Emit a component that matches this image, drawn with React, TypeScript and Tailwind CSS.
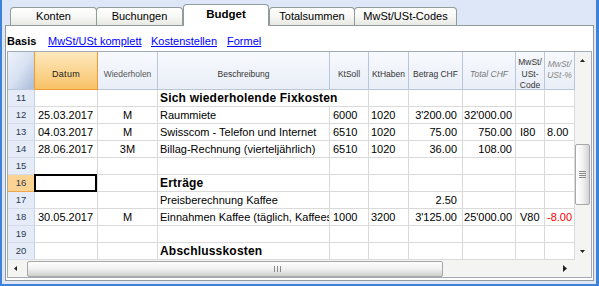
import React from 'react';

type Row = {
  n: number;
  date?: string;
  rep?: string;
  desc?: string;
  bold?: boolean;
  soll?: string;
  haben?: string;
  betrag?: string;
  total?: string;
  code?: string;
  pct?: string;
  red?: boolean;
  sel?: boolean;
  over?: boolean;
};

const rows: Row[] = [
  { n: 11, desc: 'Sich wiederholende Fixkosten', bold: true, over: true },
  { n: 12, date: '25.03.2017', rep: 'M', desc: 'Raummiete', soll: '6000', haben: '1020', betrag: "3'200.00", total: "32'000.00" },
  { n: 13, date: '04.03.2017', rep: 'M', desc: 'Swisscom - Telefon und Internet', soll: '6510', haben: '1020', betrag: '75.00', total: '750.00', code: 'I80', pct: '8.00' },
  { n: 14, date: '28.06.2017', rep: '3M', desc: 'Billag-Rechnung (vierteljährlich)', soll: '6510', haben: '1020', betrag: '36.00', total: '108.00' },
  { n: 15 },
  { n: 16, desc: 'Erträge', bold: true, sel: true },
  { n: 17, desc: 'Preisberechnung Kaffee', betrag: '2.50' },
  { n: 18, date: '30.05.2017', rep: 'M', desc: 'Einnahmen Kaffee (täglich, Kaffeestube)', soll: '1000', haben: '3200', betrag: "3'125.00", total: "25'000.00", code: 'V80', pct: '-8.00', red: true },
  { n: 19 },
  { n: 20, desc: 'Abschlusskosten', bold: true },
];

function Tab({ label, className, active }: { label: string; className: string; active?: boolean }) {
  if (active) {
    return (
      <div
        className={`h-[22px] mb-[-1px] border border-b-0 border-[#919b9c] rounded-t-[4px] bg-white flex items-center justify-center text-[11.5px] font-bold text-black pb-[1px] ${className}`}
      >
        {label}
      </div>
    );
  }
  return (
    <div
      className={`h-[18px] border border-b-0 border-[#919b9c] rounded-t-[4px] bg-linear-to-b from-white via-[#f7f7f5] to-[#e8e8e3] flex items-center justify-center text-[11px] text-black ${className}`}
    >
      {label}
    </div>
  );
}

const cellBase = 'h-[17px] shrink-0 border-r border-b border-[#dadada] flex items-center text-[11px] leading-[13px] whitespace-nowrap';
const hdrBase = 'h-[38px] shrink-0 border-r border-b border-[#b9c5d9] bg-linear-to-b from-[#f7f9fd] to-[#e9eef7] text-center text-[8.5px] overflow-hidden';

export default function App() {
  return (
    <div className="w-[599px] h-[286px] bg-[#dee7f7] border-l-2 border-r-[3px] border-b-2 border-[#3f82da] overflow-hidden font-['Liberation_Sans',Arial,sans-serif] text-black">
      {/* Tabs */}
      <div className="relative z-10 h-[25px] flex items-end pl-[8px]">
        <Tab label="Konten" className="w-[87px]" />
        <Tab label="Buchungen" className="w-[87px] ml-[-1px]" />
        <Tab label="Budget" className="w-[86px]" active />
        <Tab label="Totalsummen" className="w-[86px]" />
        <Tab label="MwSt/USt-Codes" className="w-[103px] ml-[-1px]" />
      </div>

      {/* Panel */}
      <div className="ml-[3px] w-[589px] h-[256px] border border-[#919b9c] bg-white">
        {/* Link row */}
        <div className="h-[25px] flex items-center pt-[6px] pl-[1px] text-[11px] leading-[13px]">
          <div className="w-[41px] font-bold">Basis</div>
          <div className="w-[103px]">
            <span className="text-[#0000ff] underline">MwSt/USt komplett</span>
          </div>
          <div className="w-[76px]">
            <span className="text-[#0000ff] underline">Kostenstellen</span>
          </div>
          <div>
            <span className="text-[#0000ff] underline">Formel</span>
          </div>
        </div>

        {/* Grid */}
        <div className="ml-[1px] w-[585px] h-[227px] border border-[#a3aab4] flex flex-col">
          <div className="flex h-[208px]">
            <div className="w-[567px] flex flex-col">
              {/* Header */}
              <div className="flex">
                <div className="w-[27px] h-[38px] shrink-0 border-r border-b border-r-[#f29b32] border-b-[#b9c5d9] bg-linear-to-br from-[#eef3fb] via-[#d8e2f2] to-[#a9bcd9]" />
                <div className="w-[63px] h-[38px] shrink-0 border-r border-b border-[#f29b32] bg-linear-to-b from-[#fde9bd] to-[#f8c265] text-center text-[9px] leading-[12px] pt-[16px] tracking-[0.3px] text-[#1a1a1a]">
                  Datum
                </div>
                <div className={`${hdrBase} w-[60px] pt-[16px] leading-[12px] text-[#555]`}>Wiederholen</div>
                <div className={`${hdrBase} w-[172px] pt-[16px] leading-[12px] text-[#333]`}>Beschreibung</div>
                <div className={`${hdrBase} w-[39px] pt-[16px] leading-[12px] text-[#333]`}>KtSoll</div>
                <div className={`${hdrBase} w-[40px] pt-[16px] leading-[12px] text-[#333]`}>KtHaben</div>
                <div className={`${hdrBase} w-[54px] pt-[16px] leading-[12px] text-[#333]`}>Betrag CHF</div>
                <div className={`${hdrBase} w-[53px] pt-[16px] leading-[12px] italic text-[#777]`}>Total CHF</div>
                <div className={`${hdrBase} w-[29px] pt-[5px] leading-[11.5px] text-[#333]`}>
                  MwSt/
                  <br />
                  USt-
                  <br />
                  Code
                </div>
                <div className={`${hdrBase} w-[30px] pt-[7px] leading-[11px] italic text-[#888]`}>
                  MwSt/
                  <br />
                  USt-%
                </div>
              </div>

              {/* Rows */}
              {rows.map((r) => (
                <div key={r.n} className="flex">
                  <div
                    className={`w-[27px] h-[17px] shrink-0 border-r border-b flex items-center justify-center text-[9.5px] text-[#2b3852] ${
                      r.sel ? 'bg-[#fbd493] border-[#eea64a]' : 'bg-[#e5ecf7] border-r-[#c4d0e3] border-b-[#d4dcea]'
                    }`}
                  >
                    {r.n}
                  </div>
                  <div className={`${cellBase} w-[63px] pl-[3px] relative`}>
                    {r.date}
                    {r.sel && <div className="absolute left-[-1px] top-[-1px] w-[63px] h-[18px] border-2 border-black" />}
                  </div>
                  <div className={`${cellBase} w-[60px] justify-center`}>{r.rep}</div>
                  <div
                    className={`${cellBase} w-[172px] pl-[2px] ${r.over ? 'border-r-transparent overflow-visible' : 'overflow-hidden'} ${
                      r.bold ? 'text-[12px] font-bold tracking-[0.2px]' : ''
                    }`}
                  >
                    {r.desc}
                  </div>
                  <div className={`${cellBase} w-[39px] pl-[3px]`}>{r.soll}</div>
                  <div className={`${cellBase} w-[40px] pl-[2px]`}>{r.haben}</div>
                  <div className={`${cellBase} w-[54px] justify-end pr-[5px]`}>{r.betrag}</div>
                  <div className={`${cellBase} w-[53px] justify-end pr-[3px]`}>{r.total}</div>
                  <div className={`${cellBase} w-[29px] pl-[4px]`}>{r.code}</div>
                  <div className={`${cellBase} w-[30px] pl-[2px] overflow-hidden ${r.red ? 'text-[#ff0000]' : ''}`}>{r.pct}</div>
                </div>
              ))}
            </div>

            {/* Vertical scrollbar */}
            <div className="w-[16px] h-[208px] bg-[#f4f4f3] flex flex-col">
              <div className="h-[17px] flex items-center justify-center pr-[1px]">
                <svg width="5" height="3" viewBox="0 0 5 3">
                  <polygon points="2.5,0 5,3 0,3" fill="#222" />
                </svg>
              </div>
              <div className="mt-[75px] ml-[0px] w-[15px] h-[61px] rounded-[2px] border border-[#a7a7a7] bg-linear-to-r from-white via-[#f3f3f3] to-[#d3d3d3] flex flex-col items-center justify-center gap-[1px]">
                <div className="w-[7px] h-px bg-[#8a8a8a]" />
                <div className="w-[7px] h-px bg-[#8a8a8a]" />
                <div className="w-[7px] h-px bg-[#8a8a8a]" />
                <div className="w-[7px] h-px bg-[#8a8a8a]" />
              </div>
              <div className="flex-1" />
              <div className="h-[17px] flex items-center justify-center pr-[1px]">
                <svg width="5" height="3" viewBox="0 0 5 3">
                  <polygon points="0,0 5,0 2.5,3" fill="#222" />
                </svg>
              </div>
            </div>
          </div>

          {/* Horizontal scrollbar */}
          <div className="flex h-[17px]">
            <div className="w-[567px] h-[17px] bg-[#f4f4f3] flex items-center pl-[6px] pr-[8px]">
              <svg width="3" height="5" viewBox="0 0 3 5">
                <polygon points="3,0 3,5 0,2.5" fill="#222" />
              </svg>
              <div className="ml-[10px] w-[416px] h-[16px] mt-[1px] rounded-[2px] border border-[#a7a7a7] bg-linear-to-b from-white via-[#f1f1f1] to-[#cfcfcf] flex items-center justify-center gap-[1px] pl-[84px]">
                <div className="w-px h-[6px] bg-[#8a8a8a]" />
                <div className="w-px h-[6px] bg-[#8a8a8a] ml-[1px]" />
                <div className="w-px h-[6px] bg-[#8a8a8a] ml-[1px]" />
              </div>
              <div className="flex-1" />
              <svg width="4" height="7" viewBox="0 0 4 7">
                <polygon points="0,0 4,3.5 0,7" fill="#222" />
              </svg>
            </div>
            <div className="w-[16px] h-[17px] bg-[#f4f4f3]" />
          </div>
        </div>
      </div>
    </div>
  );
}
